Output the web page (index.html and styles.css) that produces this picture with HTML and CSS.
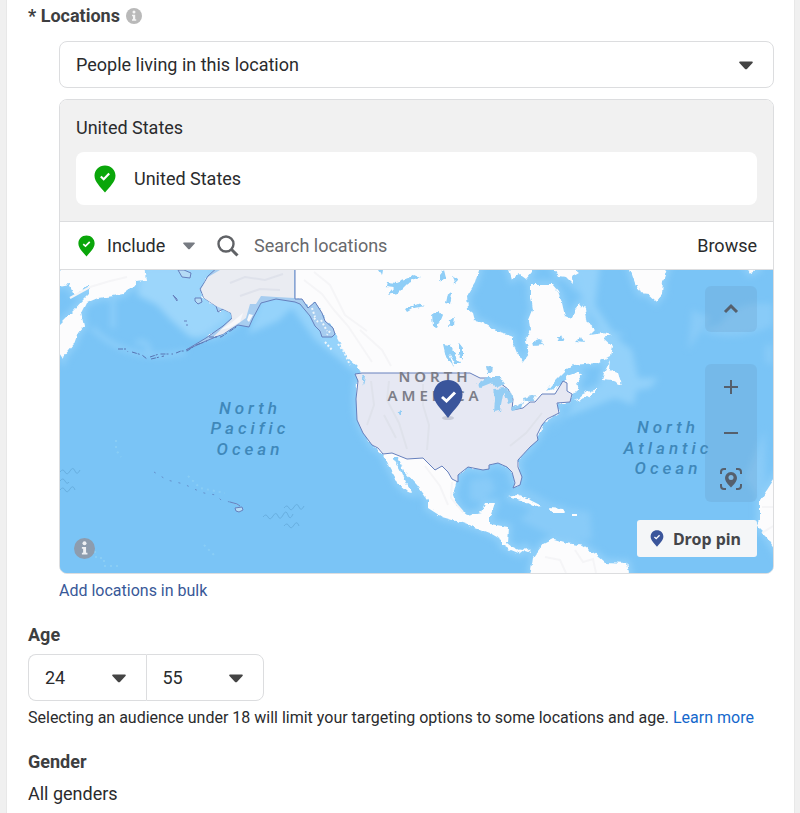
FILE: index.html
```html
<!DOCTYPE html>
<html lang="en">
<head>
<meta charset="utf-8">
<meta name="viewport" content="width=device-width, initial-scale=1">
<title>Audience targeting</title>
<link rel="stylesheet" href="styles.css">
</head>
<body>
<svg class="defs" aria-hidden="true">
  <symbol id="pin" viewBox="0 0 22 28"><path d="M11 0.500C5 0.500 0.500 5 0.500 10.800C0.500 17 6.500 22 11 27.500C15.500 22 21.500 17 21.500 10.800C21.500 5 17 0.500 11 0.500Z" fill="currentColor"/><path d="M6.800 11.500L9.700 14.200L15.200 8.600" fill="none" stroke="#fff" stroke-width="2.200"/></symbol>
  <symbol id="caret" viewBox="0 0 14 9"><path d="M1 0.500H13C14 0.500 14 1.500 13.500 2L8.200 7.700C7.500 8.500 6.500 8.500 5.800 7.700L0.500 2C0 1.500 0 0.500 1 0.500Z" fill="currentColor"/></symbol>
  <symbol id="info" viewBox="0 0 20 20"><circle cx="10" cy="10" r="10" fill="currentColor"/><circle cx="10" cy="5" r="1.900" fill="#fff" opacity=".85"/><path d="M7.500 8.500H11.500V14H12.800V15.800H7.500V14H8.700V10.300H7.500Z" fill="#fff" opacity=".85"/></symbol>
</svg>
<main class="panel">
  <section>
    <h2 class="heading">* Locations <svg class="info"><use href="#info"/></svg></h2>
    <div class="locations">
      <div class="select">
        <select aria-label="Location type"><option>People living in this location</option></select>
        <svg class="caret"><use href="#caret"/></svg>
      </div>
      <div class="card">
        <div class="selected">
          <h3 class="country">United States</h3>
          <div class="item"><svg class="item-pin"><use href="#pin"/></svg>United States</div>
        </div>
        <div class="search">
          <svg class="include-pin"><use href="#pin"/></svg>
          <div class="include">
            <select aria-label="Include or exclude"><option>Include</option></select>
            <svg class="caret"><use href="#caret"/></svg>
          </div>
          <svg class="magnifier" viewBox="0 0 22 22"><circle cx="9" cy="9" r="7.500" fill="none" stroke="currentColor" stroke-width="2.400"/><path d="M14.500 14.500L20.500 20.500" stroke="currentColor" stroke-width="3"/></svg>
          <input type="text" placeholder="Search locations" aria-label="Search locations">
          <button type="button" class="browse">Browse</button>
        </div>
        <div class="map">
          <svg class="world" viewBox="60 270 713 303" role="img" aria-label="Map of North America">
            <defs>
              <filter id="soft" x="-20%" y="-20%" width="140%" height="140%"><feGaussianBlur stdDeviation="3"/></filter>
              <filter id="coast" x="-5%" y="-5%" width="110%" height="110%"><feTurbulence type="fractalNoise" baseFrequency=".18" numOctaves="2" seed="4"/><feDisplacementMap in="SourceGraphic" scale="5" xChannelSelector="R" yChannelSelector="G"/></filter>
              <g id="land">
                <path d="M60 266H144L146 280L136 281L134 286L123 294L113 296L98 298L86 303L81 313L84 326L78 333L74 344L64 356L63 359L58 351V326L73 311L84 299L89 294L89 284L79 293H73L69 284L58 286Z"/>
                <path d="M219 266L208 276L204 283L200 289L204 298L216 306L218 312L223 309L231 313L232 318L223 326L206 338L223 333L238 322L249 315L253 304L261 296L276 297L295 300L302 299L308 308L315 302L322 313L325 321L333 328L336 336L340 344L348 358L357 366L362 374L357 381L356 399L357 413L361 427L372 445L383 454L388 465L395 477L398 484L407 492L412 493L405 482L400 470L393 458L398 458L403 470L417 485L428 500L428 508L442 517L463 523L477 528L490 533L502 540L502 545L510 550L520 554L525 550L531 552L525 547L520 551L512 547L507 543L508 527L490 524V517L495 503H485L481 512L467 515L458 507L453 495L456 483L458 475L468 467L483 470L489 465L498 463L507 467L512 472L513 480L517 487L521 478L518 467V460L530 447L537 438L545 422L559 413L557 404L570 402L572 394L579 391L577 382L582 375L578 372L567 376L560 386L547 391L557 379L567 369L573 365L597 363L610 356L612 346L603 338L612 335L603 333L590 335L595 330L588 324L585 309L580 303L575 309L572 319L565 316L562 303L558 291L552 284L531 284L531 296L533 310L529 320L530 330L526 340L529 354L523 362L517 353L513 343V336L497 331L483 323L475 321L473 313L468 309L467 296L475 283L480 266Z"/>
                <path d="M629 266L635 283L640 293L648 294L656 301L662 294L663 281L668 266ZM553 266L558 276L566 277L573 284L572 277L579 273L570 266ZM508 266L512 279L519 274L526 279L532 272V266ZM610 361L604 373L602 380L613 381L622 385L618 373L609 370ZM575 401L583 394L598 388L590 396ZM746 266L750 273L758 269V266Z"/>
                <path d="M507 497L517 495L530 500L542 506L535 507L521 500ZM550 508L562 509L565 513L552 513ZM572 514H577V516H572Z"/>
                <path d="M530 577L533 558L543 544L553 539L567 543L583 546L597 555L605 562L627 563L630 577ZM776 476L767 490L760 500V520L757 527L767 537L776 551Z"/>
              </g>
              <path id="usa" d="M362 373H470L480 378L490 378L500 383L508 389L513 399L512 410L523 408L530 402L535 402L542 394L555 394L563 381L567 383V391L572 394L570 402L557 403L559 413L547 419L542 425L537 435L538 440L530 447L518 460V467L522 477L520 485L513 488L515 483L512 472L507 467L498 463L489 465V469L483 470L468 467L458 475V482L452 479L448 472L442 466L435 470L423 458L407 459L392 453L383 454L378 448L372 445L363 433L357 420L356 399L358 381L355 374Z"/>
              <path id="alaska" d="M295 266V299H302L308 308L315 302L322 313L325 321L333 328L335 334L332 337H322L320 331L315 326L310 316L300 304L295 302L276 299L261 303L253 318L249 327L238 325L223 334L206 341L186 350L206 338L223 326L232 318L231 313L223 309L218 312L216 306L204 298L200 289L204 283L208 276L219 266Z"/>
            </defs>
            <rect x="60" y="270" width="713" height="303" fill="#7ac4f6"/>
            <g filter="url(#soft)">
              <use href="#land" fill="#8fcff9" stroke="#8fcff9" stroke-width="7"/>
              <path d="M144 265H215L203 290L230 316L200 338L190 337L171 320L157 305L137 295Z" fill="#9cd6fb"/>
              <path d="M248 334L278 321L292 308L315 340L340 360L356 374L340 330L290 296L262 298Z" fill="#95d3fb"/>
              <path d="M575 265H600L595 305L617 338L632 350L638 378L658 378L650 388L637 390L633 405L615 398L585 410L565 417L548 434L578 400L605 380L600 330L578 290Z" fill="#93d1fa"/>
              <path d="M470 480L490 477L495 490L482 502L470 500ZM520 486L560 507L590 512L592 540L560 540L520 520L530 510Z" fill="#88cbf8"/>
              <path d="M720 325Q735 300 773 304V325Q735 345 700 330ZM692 310L710 318L688 350ZM765 345L773 345V365L765 362Z" fill="#88cbf8"/>
              <path d="M765 430L745 478L760 500L766 480Z" fill="#88cbf8"/>
              <path d="M92 328Q130 365 186 352M136 343Q150 338 149 356M113 300V328" fill="none" stroke="#91d0fa" stroke-width="4"/>
            </g>
            <path d="M88 552H96V558H104V566H120M116 440V450L121 457M204 545L215 556M188 476L200 488L225 493" fill="none" stroke="#9fdbf6" stroke-width="2" stroke-dasharray="2 4" opacity=".4"/>
            <use href="#land" fill="#fcfcfd" filter="url(#coast)"/>
            <g fill="none" stroke="#f5f5f7" stroke-width="2">
              <path d="M304 280L322 294L334 310L348 326L360 344L372 362M314 272L330 285L345 315L367 331M360 330L382 350L391 366M70 298L90 287L110 281L127 277M425 466L440 486L448 505M452 482L451 498L463 512M545 557L560 560L566 573M575 550L583 562L593 559L596 573M762 507H773M762 533L773 526"/>
            </g>
            <g fill="#8fcef7" filter="url(#coast)">
              <path d="M387 282L397 283L407 279L414 274L421 277L407 284L398 293L388 295L394 288L386 287ZM405 309L418 304L425 306L414 308L407 312ZM440 275L444 270L446 278L440 281ZM452 276L458 280L454 284ZM448 293L452 294L450 304L446 303ZM432 314L439 311L442 315L437 327L433 326ZM450 321L455 317L454 325L449 326ZM443 344L450 345L455 354L460 364L455 364L449 353L453 366L446 357ZM459 343L463 348L463 360L459 354ZM532 342L540 339L544 345L533 346ZM557 338L562 335L565 341H558ZM576 342L581 337L584 343ZM378 270L383 270L382 276Z"/>
            </g>
            <use href="#usa" fill="#e6e8f3" stroke="#6680bd"/>
            <use href="#alaska" fill="#a7cdf0" stroke="#6680bd"/>
            <path d="M220 270H294V298L276 297L261 296L256 304L250 304L246 318L223 334L213 337L232 319L231 313L223 309L216 306L204 298L201 289L208 277Z" fill="#eaecf2"/>
            <path d="M247 320L249 314L253 315L249 322ZM220 330L231 323L243 313L240 322L229 328Z" fill="#f7f8fb"/>
            <g fill="none" stroke="#dfe2eb" stroke-width="2"><path d="M230 283L245 277L265 280L283 274M240 296L260 289L280 290M371 381L374 405L367 425M389 381L387 400L399 423L407 449M423 384V405L429 425L427 450M510 446L526 433L542 413M384 415L396 438"/></g>
            <path d="M312 308L315 317M321 320L327 331M314 318L318 322M330 331L327 335M325 342L332 350M338 344L344 352L350 365" fill="none" stroke="#eef6fb" stroke-width="2" stroke-dasharray="2 2"/>
            <path d="M477 384L487 377H500L505 384L498 387L491 383L481 387ZM493 389L507 388L503 395L500 411L494 412L495 399ZM503 389L511 392L513 401L508 403ZM511 408L523 402L521 408L513 411ZM523 398L536 395L533 401L524 402ZM487 366L493 367L492 373H488ZM398 412L402 411V416ZM362 375L366 377L364 386Z" fill="#94cdf4" filter="url(#coast)"/>
            <path d="M178 270L182 277L190 278L191 273L184 270ZM195 298L201 298L202 302L198 304L195 301ZM173 295L177 299V301ZM184 321H187M186 325H188M235 508L242 507L243 510L239 512L236 511ZM230 502L237 504L240 506" fill="#b5dbf5" stroke="#6680bd"/>
            <path d="M118 349L126 349L128 352M132 352L142 355L147 359M150 357L159 354L173 354M151 359L164 356M176 353L181 351L187 351L196 345L207 341M209 337L221 337L238 326" fill="none" stroke="#5874b2" stroke-dasharray="5 1 2 3"/>
            <path d="M154 472L167 480L184 484L194 489L204 493L216 495L221 500L230 502" fill="none" stroke="#6691cc" stroke-dasharray="2 7"/>
            <g fill="none" stroke="#68afe0" stroke-width="1"><path d="M60 472q3 -4 5 0t5 -1t5 0t5 -1M60 481q3 -4 5 0t4 1M60 490q3 -4 5 0t5 -1t5 1"/><path d="M284 508q3 -4 5 0t5 -1t5 0t5 -1M263 517q3 -4 5 0t5 -1t5 0t5 -1t5 0t5 -1M284 526q3 -4 5 0t5 -1t5 1"/></g>
            <g class="ocean"><text x="250" y="414">North</text><text x="250" y="434">Pacific</text><text x="250" y="455">Ocean</text><text x="668" y="433">North</text><text x="668" y="454">Atlantic</text><text x="668" y="474">Ocean</text></g>
            <g class="continent"><text x="435" y="382">NORTH</text><text x="435" y="401">AMERICA</text></g>
            <ellipse cx="448" cy="418" rx="6" ry="2" fill="#9c9fae" opacity=".4"/>
            <path d="M448 380C440 380 433.500 386 433.500 394.500C433.500 403 441 408 448 418C455 408 462.500 403 462.500 394.500C462.500 386 456 380 448 380Z" fill="#3a559b"/>
            <path d="M442 397L446.500 401L455 392.500" fill="none" stroke="#fff" stroke-width="3"/>
          </svg>
          <svg class="attribution"><use href="#info"/></svg>
          <div class="controls">
            <button type="button" aria-label="Collapse map"><svg viewBox="0 0 24 24"><path d="M6 15L12 9L18 15" stroke-width="3"/></svg></button>
            <div class="zoom">
              <button type="button" aria-label="Zoom in"><svg viewBox="0 0 24 24"><path d="M5 12H19M12 5V19" stroke-width="2"/></svg></button>
              <button type="button" aria-label="Zoom out"><svg viewBox="0 0 24 24"><path d="M5 12H19" stroke-width="2"/></svg></button>
              <button type="button" aria-label="Find my location"><svg viewBox="0 0 24 24"><path d="M2 7V5Q2 2 5 2H7M17 2H19Q22 2 22 5V7M22 17V19Q22 22 19 22H17M7 22H5Q2 22 2 19V17" stroke-width="2"/><path d="M12 6C8.800 6 7 8.500 7 11C7 14.500 10 17 12 19C14 17 17 14.500 17 11C17 8.500 15.200 6 12 6Z" fill="currentColor" stroke-width="2"/><circle cx="12" cy="10.500" r="2.500" fill="#7fb9e3" stroke="none"/></svg></button>
            </div>
          </div>
          <button type="button" class="drop"><svg><use href="#pin"/></svg>Drop pin</button>
        </div>
      </div>
      <a class="bulk" href="#bulk">Add locations in bulk</a>
    </div>
  </section>
  <section class="block">
    <h2 class="heading">Age</h2>
    <div class="ages">
      <div class="select"><select aria-label="Minimum age"><option>24</option></select><svg class="caret"><use href="#caret"/></svg></div>
      <div class="select"><select aria-label="Maximum age"><option>55</option></select><svg class="caret"><use href="#caret"/></svg></div>
    </div>
    <p class="note">Selecting an audience under 18 will limit your targeting options to some locations and age. <a href="#learn">Learn more</a></p>
  </section>
  <section class="block">
    <h2 class="heading">Gender</h2>
    <p class="value">All genders</p>
  </section>
</main>
</body>
</html>
```
FILE: styles.css
```css
* { box-sizing: border-box; }
body { margin: 0; background: #f0f0f0; color: #2a2b2d; font: 18px/24px Roboto, "Liberation Sans", sans-serif; }
h2, h3, p { margin: 0; }
a { text-decoration: none; }
button, select, input { font: inherit; color: inherit; border: 0; background: none; padding: 0; margin: 0; }
select { appearance: none; width: 100%; }
svg { display: block; flex: none; }
.defs { display: none; }
.panel { min-height: 100vh; margin: 0 5px 0 6px; padding: 4px 20px 6px 21px; background: #fff; border: solid #e8e8e8; border-width: 0 1px; }
.heading { display: flex; align-items: center; gap: 6px; font-size: 18px; font-weight: 700; color: #3d3e40; }
.info { width: 16px; height: 16px; color: #b9b9b9; }
.locations { margin: 13px 0 0 31px; }
.select { position: relative; border: 1px solid #dcdddf; border-radius: 8px; background: #fff; }
.select select { display: block; height: 45px; padding: 0 40px 0 16px; }
.caret { position: absolute; right: 20px; top: 50%; width: 14px; height: 9px; margin-top: -4px; color: #444; pointer-events: none; }
.card { margin-top: 11px; border: 1px solid #dcdddf; border-radius: 8px; overflow: hidden; }
.selected { padding: 16px; background: #f1f1f1; }
.country { font-size: 18px; font-weight: 400; }
.item { display: flex; align-items: center; gap: 18px; min-height: 53px; margin-top: 12px; padding: 0 18px; background: #fff; border-radius: 8px; }
.item-pin { width: 22px; height: 28px; color: #0aa60a; }
.search { display: flex; align-items: center; height: 49px; padding: 0 16px 0 18px; border: solid #dcdddf; border-width: 1px 0; }
.include-pin { width: 17px; height: 22px; color: #0aa60a; }
.include { position: relative; width: 88px; margin: 0 22px 0 12px; }
.include .caret { right: 0; width: 12px; height: 8px; color: #777b82; }
.magnifier { width: 22px; height: 22px; margin-right: 15px; color: #606266; }
.search input { flex: 1; min-width: 0; }
.search input::placeholder { color: #68696c; opacity: 1; }
.map { position: relative; background: #7ac4f6; }
.world { width: 100%; height: auto; }
.ocean, .continent { text-anchor: middle; letter-spacing: 4px; }
.ocean { font-family: Roboto, sans-serif; font-size: 17px; font-style: italic; font-weight: 500; fill: #3f88ba; }
.continent { font-family: "Noto Sans", sans-serif; font-size: 15px; font-weight: 600; fill: #7c7e88; }
.attribution { position: absolute; left: 14px; bottom: 14px; width: 21px; height: 21px; color: #8d9cae; }
.controls { position: absolute; right: 16px; top: 16px; display: grid; gap: 32px; color: #55606d; }
.controls button { display: grid; place-items: center; width: 52px; height: 46px; border-radius: 6px; background: rgba(100, 145, 185, .2); }
.controls svg { width: 24px; height: 24px; fill: none; stroke: currentColor; }
.zoom { border-radius: 6px; overflow: hidden; }
.zoom button { border-radius: 0; }
.drop { position: absolute; right: 16px; bottom: 16px; display: flex; align-items: center; gap: 9px; height: 37px; padding: 0 16px 0 13px; border-radius: 3px; background: #f4f6f8; font: 700 16px/24px "Noto Sans", sans-serif; color: #444549; }
.drop svg { width: 14px; height: 17px; color: #3a559b; }
.bulk { display: block; width: fit-content; margin-top: 5px; font-size: 16px; color: #385898; }
.block { margin-top: 20px; }
.ages { display: flex; width: 236px; margin-top: 7px; }
.ages .select { flex: 1; }
.ages .select:first-child { border-radius: 8px 0 0 8px; border-right: 0; }
.ages .select:last-child { border-radius: 0 8px 8px 0; }
.note { margin-top: 5px; font-size: 16px; }
.note a { color: #1468cc; }
.value { margin-top: 8px; }
```
